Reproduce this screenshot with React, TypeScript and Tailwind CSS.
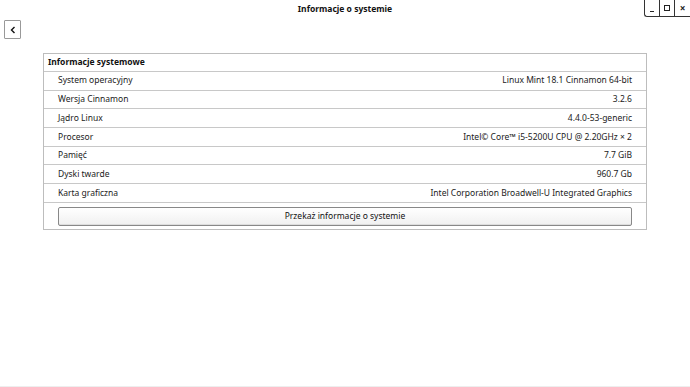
const rows: [string, string][] = [
  ["System operacyjny", "Linux Mint 18.1 Cinnamon 64-bit"],
  ["Wersja Cinnamon", "3.2.6"],
  ["Jądro Linux", "4.4.0-53-generic"],
  ["Procesor", "Intel© Core™ i5-5200U CPU @ 2.20GHz × 2"],
  ["Pamięć", "7.7 GiB"],
  ["Dyski twarde", "960.7 Gb"],
  ["Karta graficzna", "Intel Corporation Broadwell-U Integrated Graphics"],
];

export default function App() {
  return (
    <div
      className="w-[690px] h-[387px] bg-white text-[#222] flex flex-col overflow-hidden border-b border-[#eee]"
      style={{ fontFamily: '"Noto Sans", "Open Sans", sans-serif' }}
    >
      {/* Title bar */}
      <div className="relative h-[17px] flex items-center justify-center">
        <span className="text-[8.5px] font-bold text-[#111] pt-[1px]">Informacje o systemie</span>
        <div className="absolute right-0 top-0 flex border-l border-b border-[#333] rounded-bl-[3px] bg-white">
          <div className="w-[15px] h-[16px] flex items-end justify-center pb-[4px] border-r border-[#333]">
            <div className="w-[4px] h-[1.5px] bg-[#222]" />
          </div>
          <div className="w-[15px] h-[16px] flex items-center justify-center border-r border-[#333]">
            <div className="w-[6px] h-[6px] border-[1.5px] border-[#222]" />
          </div>
          <div className="w-[15px] h-[16px] flex items-center justify-center text-[10px] font-bold leading-none">
            ×
          </div>
        </div>
      </div>

      {/* Back button */}
      <div className="pl-[4px] pt-[3px]">
        <button className="w-[17px] h-[19px] border border-[#999] rounded-[1px] flex items-center justify-center">
          <svg width="6" height="8" viewBox="0 0 6 8">
            <path d="M4.5 1 L1.5 4 L4.5 7" fill="none" stroke="#111" strokeWidth="1.4" />
          </svg>
        </button>
      </div>

      {/* Panel */}
      <div className="ml-[43px] mt-[14px] w-[604px] border border-[#bdbdbd] text-[8.5px]">
        <div className="h-[18px] flex items-center px-[4px] font-bold text-[#111] border-b border-[#c8c8c8]">
          Informacje systemowe
        </div>
        {rows.map(([label, value]) => (
          <div
            key={label}
            className="h-[18.7px] flex items-center justify-between pl-[14px] pr-[14px] border-b border-[#c8c8c8]"
          >
            <span>{label}</span>
            <span>{value}</span>
          </div>
        ))}
        <div className="px-[14px] pt-[4px] pb-[3px]">
          <button className="w-full h-[19px] border border-[#888] rounded-[2px] bg-gradient-to-b from-white to-[#f0f0f0] shadow-[inset_0_-1px_0_#ddd] flex items-center justify-center text-[#111]">
            Przekaż informacje o systemie
          </button>
        </div>
      </div>
    </div>
  );
}
